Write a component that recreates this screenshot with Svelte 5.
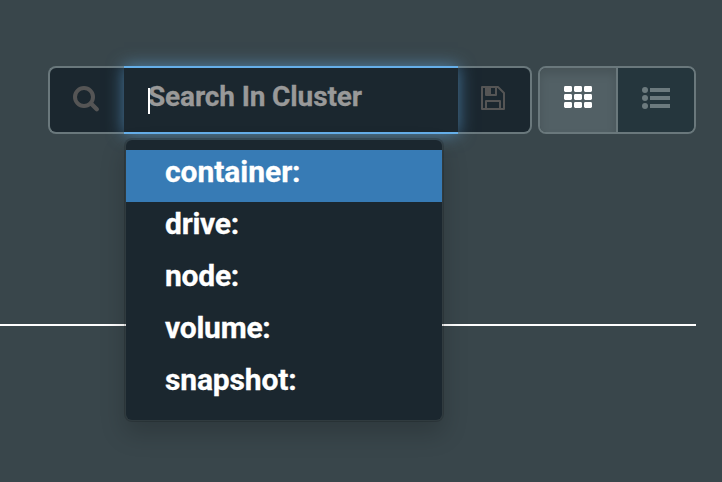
<script>
  const filters = [
    { label: 'container:', spacing: -0.05 },
    { label: 'drive:', spacing: -0.25 },
    { label: 'node:', spacing: -0.25 },
    { label: 'volume:', spacing: -0.25 },
    { label: 'snapshot:', spacing: -0.15 }
  ];
  let selected = $state(0);
  const rows = [0, 8, 16];
  const cols = [0, 10, 20];
</script>

<main>
  <div class="toolbar">
    <div class="search">
      <span class="addon left">
        <svg width="28" height="28" viewBox="0 0 28 28" aria-hidden="true">
          <circle cx="11" cy="12" r="9" fill="none" stroke="#555" stroke-width="4" />
          <path d="M18 18.5L23.8 24.2" stroke="#555" stroke-width="4.4" stroke-linecap="round" />
        </svg>
      </span>
      <div class="field">
        <span class="caret"></span>
        <span class="placeholder">Search In Cluster</span>
        <ul class="menu">
          {#each filters as f, i}
            <li class:active={i === selected} onmouseenter={() => (selected = i)}>
              <span style="letter-spacing: {f.spacing}px">{f.label}</span>
            </li>
          {/each}
        </ul>
      </div>
      <span class="addon right">
        <svg width="24" height="24" viewBox="0 0 24 24" fill="none" stroke="#555" stroke-width="2" stroke-linejoin="round" aria-hidden="true">
          <path d="M1 1H17L23 7V23H1Z" />
          <path d="M5 1V9H15V1M5 23V15H19V23" />
          <path d="M5 1H10V9H5Z" fill="#555" stroke="none" />
        </svg>
      </span>
    </div>
    <div class="views">
      <button class="view grid" aria-label="Grid view">
        <svg width="28" height="22" viewBox="0 0 28 22" fill="#fff">
          {#each rows as y}
            {#each cols as x}
              <rect {x} {y} width="8" height="6" rx="1.4" />
            {/each}
          {/each}
        </svg>
      </button>
      <button class="view list" aria-label="List view">
        <svg width="28" height="22" viewBox="0 0 28 22" fill="#6c7a7e">
          {#each rows as y}
            <circle cx="3" cy={y + 3} r="3" />
            <rect x="8" y={y + 1} width="20" height="4" />
          {/each}
        </svg>
      </button>
    </div>
  </div>
  <div class="rule"></div>
</main>

<style>
  :global(body) {
    margin: 0;
    background: #39464b;
  }
  main {
    box-sizing: border-box;
    width: 722px;
    height: 482px;
    padding-top: 66px;
    overflow: hidden;
    background: #39464b;
    font-family: Roboto, 'Liberation Sans', sans-serif;
    font-weight: 700;
    -webkit-text-stroke-width: 0.3px;
  }
  .toolbar {
    display: flex;
    gap: 6px;
    height: 68px;
    margin-left: 48px;
  }
  .search {
    display: flex;
    width: 484px;
  }
  .addon {
    box-sizing: border-box;
    display: flex;
    border: 2px solid #6a787c;
    background: #1b272f;
  }
  .left {
    width: 76px;
    padding: 17px 0 0 23px;
    border-right: 0;
    border-radius: 8px 0 0 8px;
  }
  .right {
    width: 74px;
    padding: 18px 0 0 23px;
    border-left: 0;
    border-radius: 0 8px 8px 0;
  }
  .field {
    position: relative;
    z-index: 1;
    box-sizing: border-box;
    display: flex;
    width: 334px;
    padding-left: 24px;
    border: solid #66afe9;
    border-width: 2px 0;
    background: #1b272f;
    box-shadow: 0 0 16px rgba(102, 175, 233, 0.6);
  }
  .caret {
    z-index: 1;
    width: 2px;
    height: 26px;
    margin-top: 20px;
    background: #fff;
  }
  .placeholder {
    margin: 13px 0 0 -2px;
    color: #999;
    font-size: 28px;
    line-height: 32px;
    letter-spacing: -0.13px;
    white-space: nowrap;
  }
  .menu {
    position: absolute;
    top: 70px;
    left: 0;
    box-sizing: border-box;
    width: 320px;
    height: 284px;
    margin: 0;
    padding: 10px 0;
    border: 2px solid rgba(0, 0, 0, 0.15);
    border-radius: 8px;
    background: #1b272f;
    background-clip: padding-box;
    box-shadow: 0 12px 24px rgba(0, 0, 0, 0.175);
    list-style: none;
  }
  li {
    box-sizing: border-box;
    height: 52px;
    padding: 4px 0 0 39px;
    color: #fff;
    font-size: 30px;
    line-height: 36px;
  }
  li.active {
    background: #377bb5;
  }
  .views {
    box-sizing: border-box;
    display: flex;
    width: 158px;
    overflow: hidden;
    border: 2px solid #6a787c;
    border-radius: 8px;
  }
  .view {
    box-sizing: border-box;
    display: flex;
    height: 64px;
    margin: 0;
    padding: 18px 0 0 24px;
    border: 0;
    border-radius: 0;
  }
  .grid {
    width: 78px;
    border-right: 2px solid #6a787c;
    background: #526065;
    box-shadow: inset 0 6px 10px rgba(0, 0, 0, 0.125);
  }
  .list {
    width: 76px;
    padding: 19px 0 0 24px;
    background: #25363d;
  }
  .rule {
    width: 696px;
    height: 2px;
    margin-top: 190px;
    background: #fff;
  }
</style>
